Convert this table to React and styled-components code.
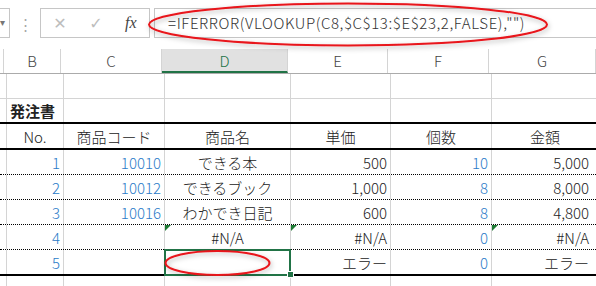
import styled, { createGlobalStyle } from 'styled-components'

const GlobalStyle = createGlobalStyle`
  body {
    margin: 0;
    background: #fff;
    font-family: "Noto Sans CJK JP", "Noto Sans", sans-serif;
  }
`

const COLS = [4, 57, 101, 126, 100, 101, 107]

const rows = [
  { no: 1, code: '10010', name: 'できる本', price: '500', qty: '10', total: '5,000' },
  { no: 2, code: '10012', name: 'できるブック', price: '1,000', qty: '8', total: '8,000' },
  { no: 3, code: '10016', name: 'わかでき日記', price: '600', qty: '8', total: '4,800' },
  { no: 4, code: '', name: '#N/A', price: '#N/A', qty: '0', total: '#N/A', flags: true },
  { no: 5, code: '', name: '', price: 'エラー', qty: '0', total: 'エラー', sel: true },
]

const App = () => {
  return (
    <Page>
      <GlobalStyle />
      <Bar>
        <NameBox>▾</NameBox>
        <Grip>⋮</Grip>
        <ActionBox>
          <ActionIcon>✕</ActionIcon>
          <ActionIcon>✓</ActionIcon>
          <Fx>fx</Fx>
        </ActionBox>
        <FormulaInput>=IFERROR(VLOOKUP(C8,$C$13:$E$23,2,FALSE),"")</FormulaInput>
      </Bar>

      <Sheet>
        <HeadRow>
          <HeadCell w={COLS[0]} />
          {['B', 'C', 'D', 'E', 'F', 'G'].map((c, i) => (
            <HeadCell key={c} w={COLS[i + 1]} active={c === 'D'}>{c}</HeadCell>
          ))}
        </HeadRow>

        <Row line="grid">
          {COLS.map((w, i) => <Cell key={i} w={w} />)}
        </Row>

        <Row line="thick">
          <Cell w={COLS[0]} />
          <Title w={COLS[1]}>発注書</Title>
          {COLS.slice(2).map((w, i) => <Cell key={i} w={w} />)}
        </Row>

        <Row line="thick" h={26}>
          <Cell w={COLS[0]} />
          {['No.', '商品コード', '商品名', '単価', '個数', '金額'].map((t, i) => (
            <Cell key={t} w={COLS[i + 1]} align="center">{t}</Cell>
          ))}
        </Row>

        {rows.map((r) => (
          <Row key={r.no} line={r.no === 5 ? 'thick' : 'dot'} h={r.no === 5 ? 26 : 25}>
            <Cell w={COLS[0]} />
            <Cell w={COLS[1]} align="right" blue>{r.no}</Cell>
            <Cell w={COLS[2]} align="right" blue>{r.code}</Cell>
            <Cell w={COLS[3]} align="center" flag={r.flags} selected={r.sel}>
              {r.name}
              {r.sel && <Handle />}
            </Cell>
            <Cell w={COLS[4]} align="right" flag={r.flags}>{r.price}</Cell>
            <Cell w={COLS[5]} align="right" blue>{r.qty}</Cell>
            <Cell w={COLS[6]} align="right" pad={9} flag={r.flags}>{r.total}</Cell>
          </Row>
        ))}

        <Row line="none">
          {COLS.map((w, i) => <Cell key={i} w={w} />)}
        </Row>
      </Sheet>

      <Marks width="596" height="286" viewBox="0 0 596 286">
        <defs>
          <filter id="sh" x="-10%" y="-30%" width="120%" height="160%">
            <feGaussianBlur in="SourceAlpha" stdDeviation="2.5" />
            <feOffset dx="1" dy="2" result="b" />
            <feFlood floodColor="#000" floodOpacity="0.3" />
            <feComposite in2="b" operator="in" />
            <feMerge>
              <feMergeNode />
              <feMergeNode in="SourceGraphic" />
            </feMerge>
          </filter>
        </defs>
        <ellipse cx="348" cy="24.5" rx="199" ry="21" fill="none" stroke="#e8141a" strokeWidth="2" filter="url(#sh)" />
        <ellipse cx="217.5" cy="263" rx="52" ry="12" fill="none" stroke="#e8141a" strokeWidth="2" filter="url(#sh)" />
      </Marks>
    </Page>
  )
}

export default App

const Page = styled.div`
  position: relative;
  width: 596px;
  height: 286px;
  overflow: hidden;
  background: #fff;
`

const Bar = styled.div`
  display: flex;
  align-items: center;
  height: 30px;
  padding-top: 8px;
  margin-bottom: 11px;
`

const NameBox = styled.div`
  box-sizing: border-box;
  width: 10px;
  height: 30px;
  border: 1px solid #c6c6c6;
  border-left: none;
  font-size: 10px;
  color: #777;
  line-height: 26px;
  text-align: left;
`

const Grip = styled.div`
  width: 30px;
  text-align: center;
  font-size: 15px;
  color: #a8a8a8;
`

const ActionBox = styled.div`
  box-sizing: border-box;
  display: flex;
  align-items: center;
  width: 110px;
  height: 30px;
  border: 1px solid #c6c6c6;
  padding-left: 8px;
  gap: 14px;
`

const ActionIcon = styled.span`
  width: 22px;
  text-align: center;
  font-size: 16px;
  color: #bdbdbd;
  font-family: "DejaVu Sans", sans-serif;
`

const Fx = styled.span`
  font-family: "Liberation Serif", serif;
  font-style: italic;
  font-size: 16px;
  color: #444;
  margin-left: 4px;
`

const FormulaInput = styled.div`
  box-sizing: border-box;
  flex: 1;
  height: 30px;
  margin-left: 4px;
  border: 1px solid #c6c6c6;
  border-right: none;
  padding-left: 13px;
  font-size: 15px;
  font-weight: 300;
  letter-spacing: 0.6px;
  line-height: 27px;
  color: #333;
  white-space: nowrap;
`

const Sheet = styled.div`
  display: flex;
  flex-direction: column;
`

const HeadRow = styled.div`
  display: flex;
  height: 25px;
  box-sizing: border-box;
  border-bottom: 1px solid #ababab;
`

const HeadCell = styled.div`
  box-sizing: border-box;
  width: ${(p) => p.w}px;
  flex: none;
  height: 24px;
  border-right: 1px solid #d4d4d4;
  background: ${(p) => (p.active ? '#e1e1e1' : '#fff')};
  border-bottom: ${(p) => (p.active ? '2px solid #217346' : 'none')};
  color: ${(p) => (p.active ? '#217346' : '#444')};
  font-size: 15px;
  font-weight: 300;
  line-height: 24px;
  text-align: center;
`

const lines = {
  grid: '1px solid #d4d4d4',
  thick: '2px solid #000',
  dot: '1px dotted #000',
  none: 'none',
}

const Row = styled.div`
  display: flex;
  box-sizing: border-box;
  height: ${(p) => p.h || 25}px;
  border-bottom: ${(p) => lines[p.line]};
`

const Cell = styled.div`
  position: relative;
  box-sizing: border-box;
  width: ${(p) => p.w}px;
  flex: none;
  display: flex;
  align-items: center;
  justify-content: ${(p) => (p.align === 'right' ? 'flex-end' : p.align === 'center' ? 'center' : 'flex-start')};
  padding: 0 ${(p) => p.pad || 3}px 0 3px;
  border-right: 1px solid #d4d4d4;
  font-size: 15px;
  font-weight: 300;
  color: ${(p) => (p.blue ? '#2a7bc8' : '#222')};
  white-space: nowrap;

  &::before {
    content: '';
    display: ${(p) => (p.flag ? 'block' : 'none')};
    position: absolute;
    left: 0;
    top: 0;
    border-top: 6px solid #1e7a34;
    border-right: 6px solid transparent;
  }

  &::after {
    content: '';
    display: ${(p) => (p.selected ? 'block' : 'none')};
    position: absolute;
    left: -1px;
    top: -1px;
    right: -1px;
    bottom: -2px;
    border: 2px solid #217346;
  }
`

const Title = styled(Cell)`
  overflow: visible;
  font-weight: bold;
`

const Handle = styled.div`
  position: absolute;
  right: -4px;
  bottom: -4px;
  width: 5px;
  height: 5px;
  background: #217346;
  border: 1px solid #fff;
  z-index: 2;
`

const Marks = styled.svg`
  position: absolute;
  left: 0;
  top: 0;
  pointer-events: none;
`
